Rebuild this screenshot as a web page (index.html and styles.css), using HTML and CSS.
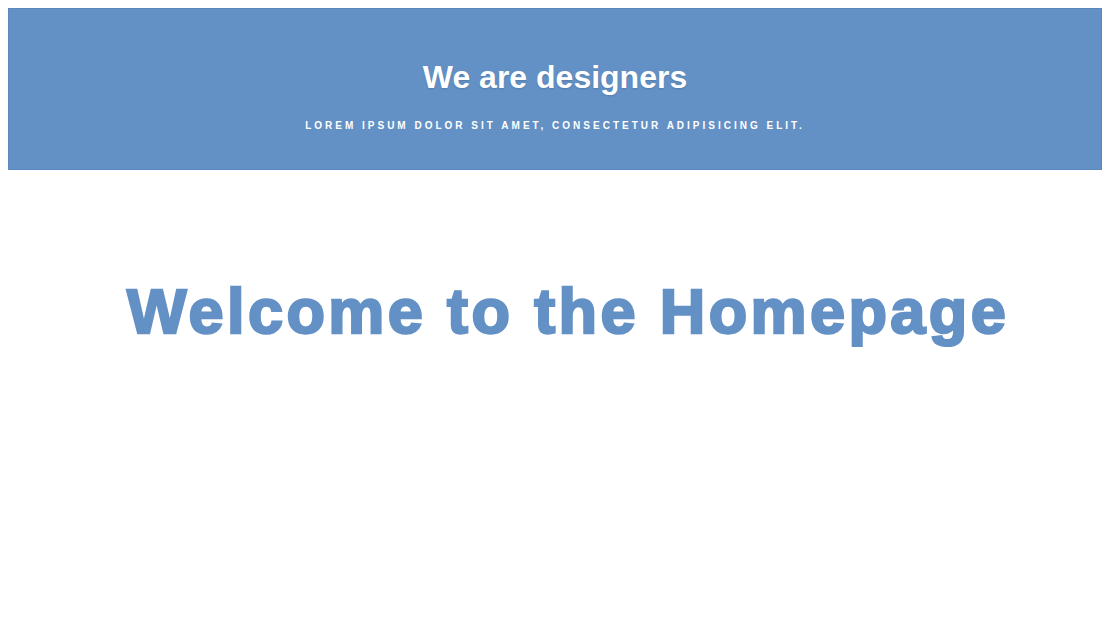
FILE: index.html
```html
<!DOCTYPE html>
<html>
<head>
<meta charset="utf-8">
<link rel="stylesheet" href="styles.css">
</head>
<body>
<header class="hero">
  <h1 class="hero-title">We are designers</h1>
  <p class="hero-sub">Lorem ipsum dolor sit amet, consectetur adipisicing elit.</p>
</header>
<main class="content">
  <h2 class="welcome">Welcome to the Homepage</h2>
</main>
</body>
</html>
```
FILE: styles.css
```css
body {
  margin: 8px 6px 8px 8px;
  background: #fff;
  font-family: "Liberation Sans", Arial, sans-serif;
}
.hero {
  background: #6391c5;
  border: 1px solid #5b88bc;
  height: 162px;
  display: flex;
  flex-direction: column;
  align-items: center;
  box-sizing: border-box;
  padding-top: 49px;
}
.hero-title {
  margin: 0;
  color: #fff;
  font-size: 32px;
  font-weight: bold;
  line-height: 38px;
  text-shadow: 0 1px 2px rgba(0,0,0,0.15);
}
.hero-sub {
  margin: 24px 0 0;
  color: #fff;
  font-size: 10px;
  font-weight: bold;
  text-transform: uppercase;
  letter-spacing: 3px;
  line-height: 12px;
}
.content {
  display: flex;
  justify-content: center;
  padding: 105px 0 0 26px;
}
.welcome {
  margin: 0;
  color: #6391c5;
  font-family: "Liberation Sans", Arial, sans-serif;
  font-weight: bold;
  font-size: 63px;
  line-height: 72px;
  letter-spacing: 3.4px;
  -webkit-text-stroke: 2.4px #6391c5;
}
```
